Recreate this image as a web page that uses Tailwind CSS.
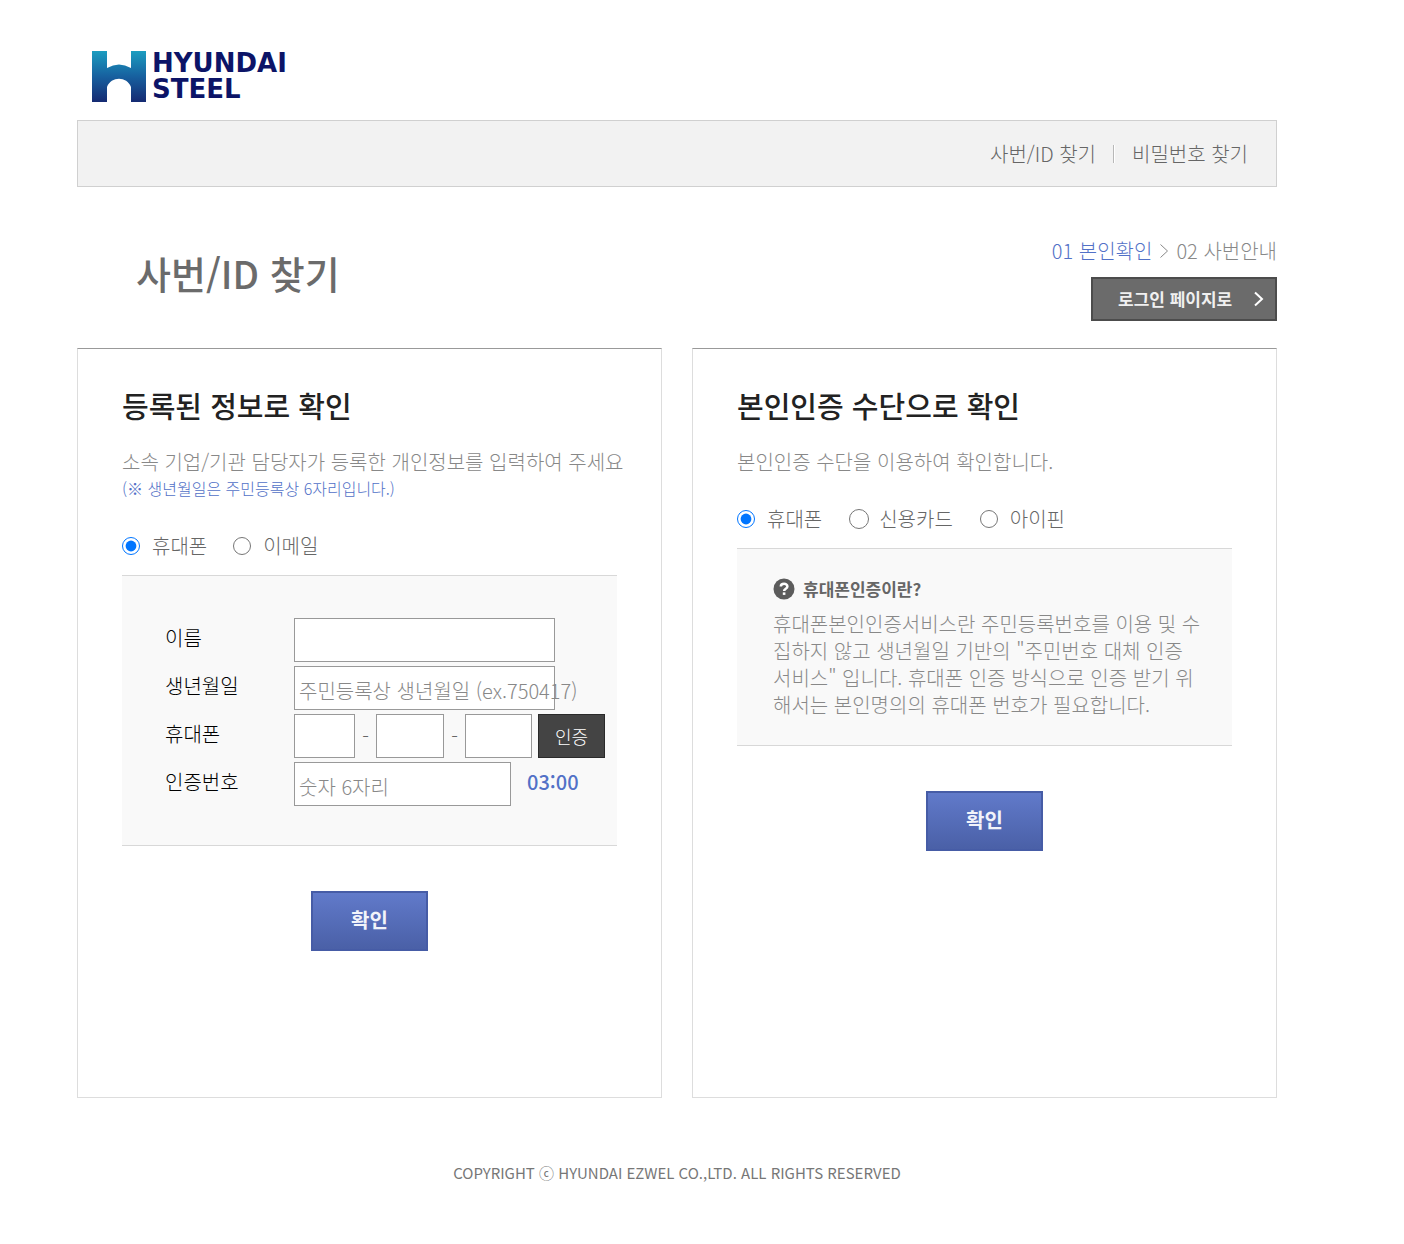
<!DOCTYPE html>
<html lang="ko">
<head>
<meta charset="utf-8">
<meta name="viewport" content="width=device-width, initial-scale=1">
<title>사번/ID 찾기</title>
<script src="https://cdn.jsdelivr.net/npm/@tailwindcss/browser@4"></script>
</head>
<body class="bg-white font-['Noto_Sans_CJK_KR',sans-serif] text-xl font-light text-[#666] lg:pr-[50px]">
<div class="mx-auto max-w-[1200px]">

  <header>
    <a href="#" aria-label="HYUNDAI STEEL" class="flex h-[120px] items-center gap-1.5 pt-8 pl-[15px]">
      <svg class="h-[51px] w-[54px]" viewBox="0 0 54 51" aria-hidden="true">
        <defs>
          <linearGradient id="mark" x1="0" y1="0" x2="0" y2="1">
            <stop offset="0" stop-color="#1b9dc0"/>
            <stop offset=".5" stop-color="#17609f"/>
            <stop offset="1" stop-color="#152a72"/>
          </linearGradient>
        </defs>
        <path fill="url(#mark)" d="M0 0H15V17Q27 10 39 17V0H54V51H39V36C35 25 19 25 15 36V51H0Z"/>
      </svg>
      <span class="font-['DejaVu_Sans',sans-serif] text-[26px] leading-[26px] font-bold text-[#0c1467]">HYUNDAI<br>STEEL</span>
    </a>
    <nav class="flex h-[67px] items-center justify-end border border-[#d0d0d0] bg-[#f2f2f2] pr-7">
      <a href="#">사번/ID 찾기</a>
      <span class="mx-[17px] h-[18px] w-[2px] border-r border-white bg-[#b8b8b8]"></span>
      <a href="#">비밀번호 찾기</a>
    </nav>
  </header>

  <main>
    <div class="flex h-[161px] justify-between pb-[27px]">
      <h1 class="pt-[58px] pl-[59px] text-[38px] leading-[56px] font-medium text-[#6b6b6b]">사번/ID 찾기</h1>
      <div class="flex flex-col items-end justify-end gap-3">
        <p class="flex items-center gap-2 leading-7 text-[#888]"><span class="text-[#5271c7]">01 본인확인</span>
          <svg class="h-4 w-2" viewBox="0 0 8 16" fill="none" stroke="#888" role="img" aria-label="다음"><path d="M.5 1.5l7 6.5-7 6.5"/></svg>
          <span>02 사번안내</span></p>
        <a href="#" class="flex h-11 w-[186px] items-center justify-between border-2 border-[#4c4c4c] bg-[#6b6b6b] pr-[11px] pl-[25px] text-[17px] font-bold text-[#f0f0f0]">로그인 페이지로
          <svg class="h-4 w-2.5" viewBox="0 0 10 16" fill="none" stroke="#fff" stroke-width="2" aria-hidden="true"><path d="M1 1.5l7 6.5-7 6.5"/></svg>
        </a>
      </div>
    </div>

    <div class="grid gap-[30px] lg:grid-cols-2">
      <section class="min-h-[750px] border border-[#ddd] border-t-[#999] px-11 pt-[38px]">
        <h2 class="text-[29px] leading-9 font-medium text-[#222]">등록된 정보로 확인</h2>
        <p class="mt-[25px] leading-[27px] whitespace-nowrap text-[#888]">소속 기업/기관 담당자가 등록한 개인정보를 입력하여 주세요</p>
        <p class="text-base leading-[27px] text-[#5271c7]">(※ 생년월일은 주민등록상 6자리입니다.)</p>
        <form>
          <div class="mt-[30px] flex h-7 items-center gap-[26px]">
            <label class="flex items-center gap-3"><input type="radio" name="target" checked class="size-[18px]">휴대폰</label>
            <label class="flex items-center gap-3"><input type="radio" name="target" class="size-[18px]">이메일</label>
          </div>
          <div class="mt-[15px] grid grid-cols-[129px_1fr] items-center gap-y-1 border-y border-[#d8d8d8] bg-[#f9f9f9] pt-[42px] pb-[39px] pl-[43px]">
            <label for="name" class="pb-1 text-black">이름</label>
            <input id="name" type="text" class="h-11 w-[261px] border border-[#999] bg-white px-1.5">

            <label for="birth" class="pb-1 text-black">생년월일</label>
            <div class="relative">
              <input id="birth" type="text" class="block h-11 w-[261px] border border-[#999] bg-white px-1.5">
              <label for="birth" class="absolute top-[11px] left-[5px] whitespace-nowrap text-[#888]">주민등록상 생년월일 (ex.750417)</label>
            </div>

            <label for="tel1" class="pb-1 text-black">휴대폰</label>
            <div class="flex items-center">
              <input id="tel1" type="text" class="h-11 w-[61px] border border-[#999] bg-white px-1.5">
              <span class="w-[21px] text-center">-</span>
              <input aria-label="휴대폰 가운데 자리" type="text" class="h-11 w-[68px] border border-[#999] bg-white px-1.5">
              <span class="w-[21px] text-center">-</span>
              <input aria-label="휴대폰 끝 자리" type="text" class="h-11 w-[67px] border border-[#999] bg-white px-1.5">
              <button type="button" class="ml-1.5 h-11 w-[67px] border border-[#2a2a2a] bg-[#444] text-lg text-white">인증</button>
            </div>

            <label for="code" class="pb-1 text-black">인증번호</label>
            <div class="relative flex items-center">
              <input id="code" type="text" class="h-11 w-[217px] border border-[#999] bg-white px-1.5">
              <label for="code" class="absolute top-[11px] left-[5px] text-[#888]">숫자 6자리</label>
              <span class="ml-4 pb-1 font-medium text-[#5271c7]">03:00</span>
            </div>
          </div>
          <button type="submit" class="mx-auto mt-[45px] block h-[60px] w-[117px] border-2 border-[#465ca6] bg-linear-to-b from-[#617aca] to-[#4a60a7] pb-0.5 font-bold text-[#f2f4fa]">확인</button>
        </form>
      </section>

      <section class="min-h-[750px] border border-[#ddd] border-t-[#999] px-11 pt-[38px]">
        <h2 class="text-[29px] leading-9 font-medium text-[#222]">본인인증 수단으로 확인</h2>
        <p class="mt-[25px] leading-[27px] text-[#888]">본인인증 수단을 이용하여 확인합니다.</p>
        <form>
          <div class="mt-[30px] flex h-7 items-center gap-[27px]">
            <label class="flex items-center gap-3"><input type="radio" name="method" checked class="size-[18px]">휴대폰</label>
            <label class="flex items-center gap-2.5"><input type="radio" name="method" class="size-5">신용카드</label>
            <label class="flex items-center gap-3"><input type="radio" name="method" class="size-[18px]">아이핀</label>
          </div>
          <div class="mt-[15px] border-y border-[#d8d8d8] bg-[#f9f9f9] px-9 pt-[26px] pb-[27px]">
            <h3 class="flex h-7 items-center gap-2 text-[17px] font-bold">
              <svg class="size-[22px]" viewBox="0 0 22 22" aria-hidden="true">
                <circle cx="11" cy="11" r="10.5" fill="#5c5c5c"/>
                <path d="M7.8 8.6C7.8 4.9 14.4 4.9 14.4 8.4C14.4 10.8 11.1 10.6 11.1 13" fill="none" stroke="#fff" stroke-width="2.5"/>
                <rect x="9.8" y="14.4" width="2.6" height="2.5" fill="#fff"/>
              </svg>
              휴대폰인증이란?
            </h3>
            <p class="mt-[7px] leading-[27px] whitespace-nowrap text-[#888]">휴대폰본인인증서비스란 주민등록번호를 이용 및 수<br>집하지 않고 생년월일 기반의 "주민번호 대체 인증<br>서비스" 입니다. 휴대폰 인증 방식으로 인증 받기 위<br>해서는 본인명의의 휴대폰 번호가 필요합니다.</p>
          </div>
          <button type="submit" class="mx-auto mt-[45px] block h-[60px] w-[117px] border-2 border-[#465ca6] bg-linear-to-b from-[#617aca] to-[#4a60a7] pb-0.5 font-bold text-[#f2f4fa]">확인</button>
        </form>
      </section>
    </div>
  </main>

  <footer class="pt-[63px] pb-14 text-center text-[15px] leading-6 font-normal text-[#777]">COPYRIGHT ⓒ HYUNDAI EZWEL CO.,LTD. ALL RIGHTS RESERVED</footer>
</div>
</body>
</html>
